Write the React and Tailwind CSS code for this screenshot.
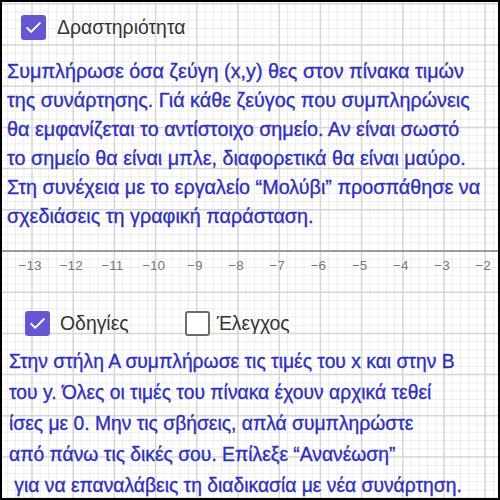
import React from "react";

const SP = 41.2;
const X0 = 32;
const AXIS_Y = 251;

function Grid() {
  const minor = [];
  const major = [];
  const step = SP / 5;
  for (let i = -10; i < 80; i++) {
    const x = X0 + i * step;
    if (x < -2 || x > 502) continue;
    if (i % 5 === 0) major.push(<line key={"vx" + i} x1={x} y1={0} x2={x} y2={500} />);
    else minor.push(<line key={"vm" + i} x1={x} y1={0} x2={x} y2={500} />);
  }
  for (let i = -40; i < 40; i++) {
    const y = AXIS_Y + i * step;
    if (y < -2 || y > 502) continue;
    if (i === 0) continue;
    if (i % 5 === 0) major.push(<line key={"hy" + i} x1={0} y1={y} x2={500} y2={y} />);
    else minor.push(<line key={"hm" + i} x1={0} y1={y} x2={500} y2={y} />);
  }
  const labels = [];
  for (let k = 0; k < 12; k++) {
    const v = -13 + k;
    labels.push(
      <text key={"l" + k} x={X0 + k * SP - 2} y={AXIS_Y + 19} textAnchor="middle" fontSize="13.5" fill="#777777" fontFamily="'Liberation Sans', Arial, sans-serif">
        {"\u2212" + Math.abs(v)}
      </text>
    );
  }
  return (
    <svg className="absolute inset-0" width="500" height="500" viewBox="0 0 500 500">
      <g stroke="#ececec" strokeWidth="1">{minor}</g>
      <g stroke="#d6d6d6" strokeWidth="1.5">{major}</g>
      <line x1={0} y1={AXIS_Y} x2={500} y2={AXIS_Y} stroke="#9c9c9c" strokeWidth="2" />
      {labels}
    </svg>
  );
}

function Check({ checked }) {
  if (checked) {
    return (
      <span className="flex h-[25px] w-[25px] items-center justify-center rounded-[3px] bg-[#6557d2]">
        <svg width="19" height="19" viewBox="0 0 24 24" fill="none" stroke="white" strokeWidth="2.6" strokeLinecap="round" strokeLinejoin="round">
          <path d="M4 12.5l5 5L20 6.5" />
        </svg>
      </span>
    );
  }
  return <span className="block h-[25px] w-[25px] rounded-[3px] border-2 border-[#6b6b6b] bg-white" />;
}

export default function App() {
  const font = { fontFamily: "'Liberation Sans', Arial, sans-serif" };
  return (
    <div className="relative h-[500px] w-[500px] overflow-hidden bg-white" style={font}>
      <Grid />
      <div className="pointer-events-none absolute inset-0 border-2 border-black" />
      <div className="relative flex flex-col">
        <div className="ml-[21px] mt-[15px] flex items-center gap-[11px]">
          <Check checked />
          <span className="text-[19.4px] leading-[25px] text-[#333333]">Δραστηριότητα</span>
        </div>
        <div className="ml-[7px] mt-[17px] text-[19.8px] leading-[29px] text-[#3030b8] [-webkit-text-stroke:0.35px_#3030b8]">
          <div>Συμπλήρωσε όσα ζεύγη (x,y) θες στον πίνακα τιμών</div>
          <div>της συνάρτησης. Γιά κάθε ζεύγος που συμπληρώνεις</div>
          <div>θα εμφανίζεται το αντίστοιχο σημείο. Αν είναι σωστό</div>
          <div>το σημείο θα είναι μπλε, διαφορετικά θα είναι μαύρο.</div>
          <div>Στη συνέχεια με το εργαλείο “Μολύβι” προσπάθησε να</div>
          <div>σχεδιάσεις τη γραφική παράσταση.</div>
        </div>
        <div className="mt-[80px] flex items-center">
          <div className="ml-[25px] flex items-center gap-[10px]">
            <Check checked />
            <span className="text-[19.4px] leading-[25px] text-[#333333]">Οδηγίες</span>
          </div>
          <div className="ml-[56px] flex items-center gap-[7px]">
            <Check checked={false} />
            <span className="text-[19.4px] leading-[25px] text-[#333333]">Έλεγχος</span>
          </div>
        </div>
        <div className="ml-[9px] mt-[10px] text-[19.3px] leading-[31px] text-[#3030b8] [-webkit-text-stroke:0.35px_#3030b8]">
          <div>Στην στήλη Α συμπλήρωσε τις τιμές του x και στην Β</div>
          <div>του y. Όλες οι τιμές του πίνακα έχουν αρχικά τεθεί</div>
          <div>ίσες με 0. Μην τις σβήσεις, απλά συμπληρώστε</div>
          <div>από πάνω τις δικές σου. Επίλεξε “Ανανέωση”</div>
          <div>&nbsp;για να επαναλάβεις τη διαδικασία με νέα συνάρτηση.</div>
        </div>
      </div>
    </div>
  );
}
